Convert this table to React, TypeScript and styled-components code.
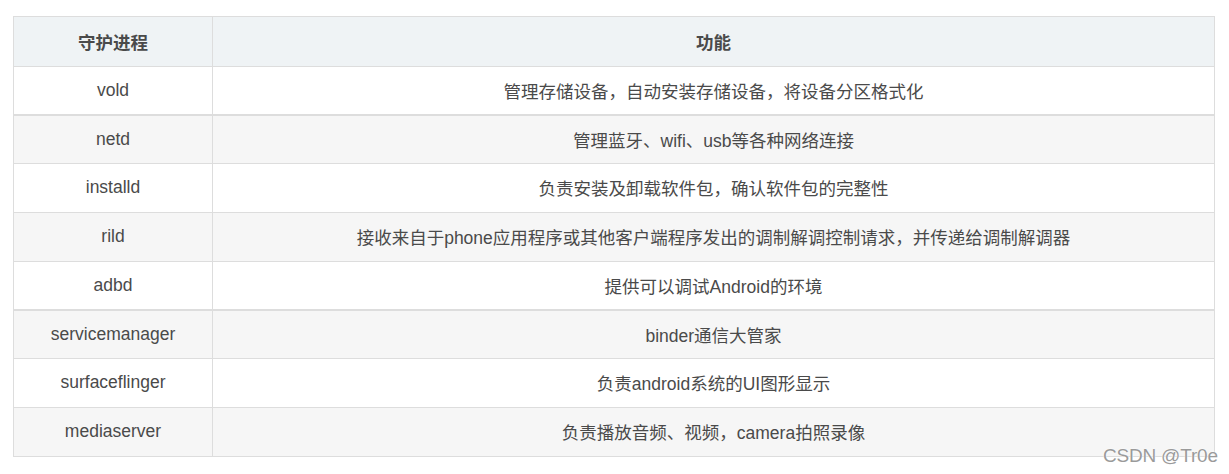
import React from "react";
import styled, { createGlobalStyle } from "styled-components";

type Row = {
  name: string;
  desc: string;
  height: number;
  thick?: boolean;
};

const rows: Row[] = [
  { name: "vold", desc: "管理存储设备，自动安装存储设备，将设备分区格式化", height: 49, thick: true },
  { name: "netd", desc: "管理蓝牙、wifi、usb等各种网络连接", height: 48 },
  { name: "installd", desc: "负责安装及卸载软件包，确认软件包的完整性", height: 49 },
  { name: "rild", desc: "接收来自于phone应用程序或其他客户端程序发出的调制解调控制请求，并传递给调制解调器", height: 49 },
  { name: "adbd", desc: "提供可以调试Android的环境", height: 49, thick: true },
  { name: "servicemanager", desc: "binder通信大管家", height: 48 },
  { name: "surfaceflinger", desc: "负责android系统的UI图形显示", height: 49 },
  { name: "mediaserver", desc: "负责播放音频、视频，camera拍照录像", height: 49 },
];

const GlobalStyle = createGlobalStyle`
  html, body {
    margin: 0;
    padding: 0;
    background: #ffffff;
  }
  body {
    font-family: "Liberation Sans", "Noto Sans CJK SC", sans-serif;
    color: #4d4d4d;
  }
`;

const Page = styled.div`
  position: relative;
  width: 1229px;
  height: 474px;
  padding: 16px 0 0 13px;
  box-sizing: border-box;
`;

const Table = styled.div`
  width: 1202px;
  border-left: 1px solid #dddddd;
  border-top: 1px solid #dddddd;
  box-sizing: border-box;
`;

const TableRow = styled.div<{ $bg: string; $h: number; $thick?: boolean }>`
  display: grid;
  grid-template-columns: 199px 1fr;
  height: ${(p) => p.$h}px;
  background-color: ${(p) => p.$bg};
  border-bottom: ${(p) => (p.$thick ? 2 : 1)}px solid #dddddd;
  box-sizing: border-box;
`;

const Cell = styled.div<{ $head?: boolean }>`
  display: flex;
  align-items: center;
  justify-content: center;
  border-right: 1px solid #dddddd;
  font-size: 17.5px;
  font-weight: ${(p) => (p.$head ? 700 : 400)};
  color: ${(p) => (p.$head ? "#4a4a4a" : "#4a4a4a")};
  white-space: nowrap;
  padding-bottom: 1px;
`;

const Watermark = styled.div`
  position: absolute;
  left: 1103px;
  top: 445px;
  font-family: "Liberation Sans", sans-serif;
  font-size: 19px;
  color: #9a9a9a;
  text-shadow: 0 0 1px #ffffff, 0 0 2px #ffffff;
  letter-spacing: -0.2px;
`;

export default function App() {
  return (
    <>
      <GlobalStyle />
      <Page>
        <Table>
          <TableRow $bg="#eff3f5" $h={50}>
            <Cell $head>守护进程</Cell>
            <Cell $head>功能</Cell>
          </TableRow>
          {rows.map((row, i) => (
            <TableRow
              key={row.name}
              $bg={i % 2 === 1 ? "#f6f6f6" : "#ffffff"}
              $h={row.height}
              $thick={row.thick}
            >
              <Cell>{row.name}</Cell>
              <Cell>{row.desc}</Cell>
            </TableRow>
          ))}
        </Table>
        <Watermark>CSDN @Tr0e</Watermark>
      </Page>
    </>
  );
}
